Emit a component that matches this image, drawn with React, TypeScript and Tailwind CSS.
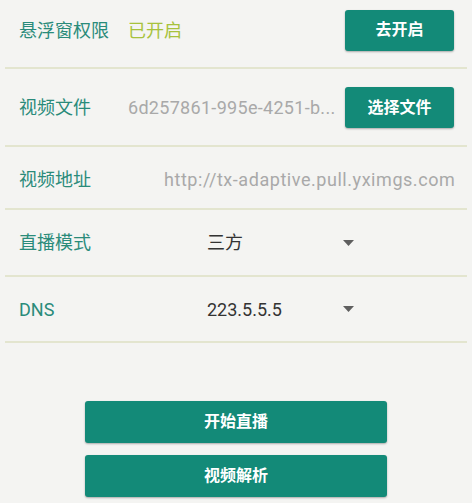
import React from 'react';

const font = { fontFamily: 'Roboto, "Noto Sans CJK SC", sans-serif' };

function Caret() {
  return (
    <svg width="11" height="6" viewBox="0 0 11 6" className="shrink-0">
      <path d="M0 0 L11 0 L5.5 6 Z" fill="#5f5f5f" />
    </svg>
  );
}

function Divider() {
  return <div className="mx-[5px] h-[2px] bg-[#e3e5cf]" />;
}

export default function App() {
  return (
    <div className="w-[472px] h-[503px] bg-[#f4f4f2] overflow-hidden" style={font}>
      {/* 悬浮窗权限 */}
      <div className="h-[67px] flex items-center pl-[19px] pr-[18px] pb-[7px]">
        <span className="text-[18px] text-[#2a8b7a] w-[109px]">悬浮窗权限</span>
        <span className="text-[18px] text-[#a7c23c]">已开启</span>
        <button className="ml-auto w-[109px] h-[41px] rounded-[3px] bg-[#138a78] text-white text-[16px] font-semibold shadow-[0_1px_2px_rgba(0,0,0,0.3)]">
          去开启
        </button>
      </div>
      <Divider />
      {/* 视频文件 */}
      <div className="h-[76px] flex items-center pl-[19px] pr-[18px] pt-[1px]">
        <span className="text-[18px] text-[#2a8b7a] w-[109px]">视频文件</span>
        <span className="text-[18px] text-[#a9a9a9] tracking-[0.3px] whitespace-nowrap">6d257861-995e-4251-b...</span>
        <button className="ml-auto w-[109px] h-[41px] rounded-[3px] bg-[#138a78] text-white text-[16px] font-semibold shadow-[0_1px_2px_rgba(0,0,0,0.3)]">
          选择文件
        </button>
      </div>
      <Divider />
      {/* 视频地址 */}
      <div className="h-[61px] flex items-center pl-[19px] pt-[4px]">
        <span className="text-[18px] text-[#2a8b7a] w-[145px]">视频地址</span>
        <span className="text-[18px] text-[#a9a9a9] tracking-[0.55px] whitespace-nowrap">http://tx-adaptive.pull.yximgs.com</span>
      </div>
      <Divider />
      {/* 直播模式 */}
      <div className="h-[65px] flex items-center pl-[19px]">
        <span className="text-[18px] text-[#2a8b7a] w-[188px]">直播模式</span>
        <span className="text-[18px] text-[#333] w-[136px]">三方</span>
        <Caret />
      </div>
      <Divider />
      {/* DNS */}
      <div className="h-[64px] flex items-center pl-[19px]">
        <span className="text-[18px] text-[#2a8b7a] w-[188px]">DNS</span>
        <span className="text-[18px] text-[#333] w-[136px]">223.5.5.5</span>
        <Caret />
      </div>
      <Divider />
      {/* 按钮 */}
      <div className="flex flex-col items-center pt-[58px] gap-[12px]">
        <button className="w-[302px] h-[42px] rounded-[3px] bg-[#138a78] text-white text-[16px] font-semibold shadow-[0_1px_2px_rgba(0,0,0,0.3)]">
          开始直播
        </button>
        <button className="w-[302px] h-[42px] rounded-[3px] bg-[#138a78] text-white text-[16px] font-semibold shadow-[0_1px_2px_rgba(0,0,0,0.3)]">
          视频解析
        </button>
      </div>
    </div>
  );
}
